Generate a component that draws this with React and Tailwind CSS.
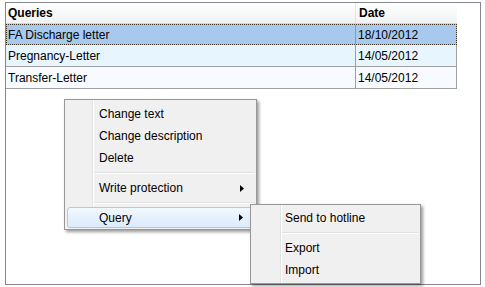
import React from "react";

const rows = [
	{ name: "FA Discharge letter", date: "18/10/2012", selected: true },
	{ name: "Pregnancy-Letter", date: "14/05/2012", bg: "bg-[#e6f5fe]" },
	{ name: "Transfer-Letter", date: "14/05/2012", bg: "bg-[#f7fbff]" },
];

function Arrow() {
	return (
		<svg width="4" height="7" viewBox="0 0 4 7" className="block">
			<path d="M0 0 L4 3.5 L0 7 Z" fill="#000" />
		</svg>
	);
}

function Item({ label, arrow }) {
	return (
		<div className="h-[22px] flex items-center pl-[34px] pr-[12px] justify-between">
			<span>{label}</span>
			{arrow && <Arrow />}
		</div>
	);
}

function Separator({ left }) {
	return (
		<div className="h-[8px] flex items-center">
			<div className={`${left} flex-1 mr-[2px]`}>
				<div className="h-px bg-[#e0e0e0]" />
				<div className="h-px bg-white" />
			</div>
		</div>
	);
}

export default function App() {
	return (
		<div
			className="relative w-[485px] h-[287px] bg-white overflow-hidden text-[12px] text-black"
			style={{ fontFamily: '"Liberation Sans", Arial, sans-serif' }}>
			<div className="ml-[5px] mt-[2px] w-[476px] h-[283px] border border-[#828790]">
				<div className="w-[451px]">
					<div className="h-[21px] flex border-b border-[#d5d5d5] bg-linear-to-b from-white to-[#f1f2f4] font-bold">
						<div className="w-[350px] pl-[2px] flex items-center border-r border-[#e3e4e6]">Queries</div>
						<div className="flex-1 pl-[3px] flex items-center">Date</div>
					</div>
					{rows.map((r) =>
						r.selected ? (
							<div
								key={r.name}
								className="h-[21px] flex bg-[#a7c9ee] border border-dotted border-[#3b2f1f]">
								<div className="w-[349px] pl-[1px] flex items-center border-r border-[#8c9bb0]">{r.name}</div>
								<div className="flex-1 pl-[2px] flex items-center">{r.date}</div>
							</div>
						) : (
							<div key={r.name} className={`h-[22px] flex border-b border-r border-[#a0a0a0] ${r.bg}`}>
								<div className="w-[350px] pl-[2px] flex items-center border-r border-[#a0a0a0]">{r.name}</div>
								<div className="flex-1 pl-[2px] flex items-center">{r.date}</div>
							</div>
						)
					)}
				</div>
			</div>

			{/* context menu */}
			<div className="absolute left-[64px] top-[99px] w-[193px] h-[131px] bg-[#f0f0f0] border border-[#979797] shadow-[2px_2px_3px_rgba(0,0,0,0.4)]">
				<div className="absolute left-[27px] top-0 bottom-0 w-[2px] flex">
					<div className="w-px bg-[#e2e3e3]" />
					<div className="w-px bg-white" />
				</div>
				<div className="relative pt-[3px]">
					<Item label="Change text" />
					<Item label="Change description" />
					<Item label="Delete" />
					<Separator left="ml-[29px]" />
					<Item label="Write protection" arrow />
					<Separator left="ml-[29px]" />
					<div className="h-[22px] px-[2px]">
						<div className="h-[21px] rounded-[3px] border border-[#a8cbf1] bg-linear-to-b from-[#f2f8fe] to-[#dcebfc] flex items-center justify-between pl-[31px] pr-[10px]">
							<span>Query</span>
							<Arrow />
						</div>
					</div>
				</div>
			</div>

			{/* submenu */}
			<div className="absolute left-[250px] top-[204px] w-[171px] h-[80px] bg-[#f0f0f0] border border-[#979797] shadow-[2px_2px_3px_rgba(0,0,0,0.4)]">
				<div className="absolute left-[29px] top-0 bottom-0 w-[2px] flex">
					<div className="w-px bg-[#e2e3e3]" />
					<div className="w-px bg-white" />
				</div>
				<div className="relative pt-[2px]">
					<Item label="Send to hotline" />
					<Separator left="ml-[31px]" />
					<Item label="Export" />
					<Item label="Import" />
				</div>
			</div>
		</div>
	);
}
